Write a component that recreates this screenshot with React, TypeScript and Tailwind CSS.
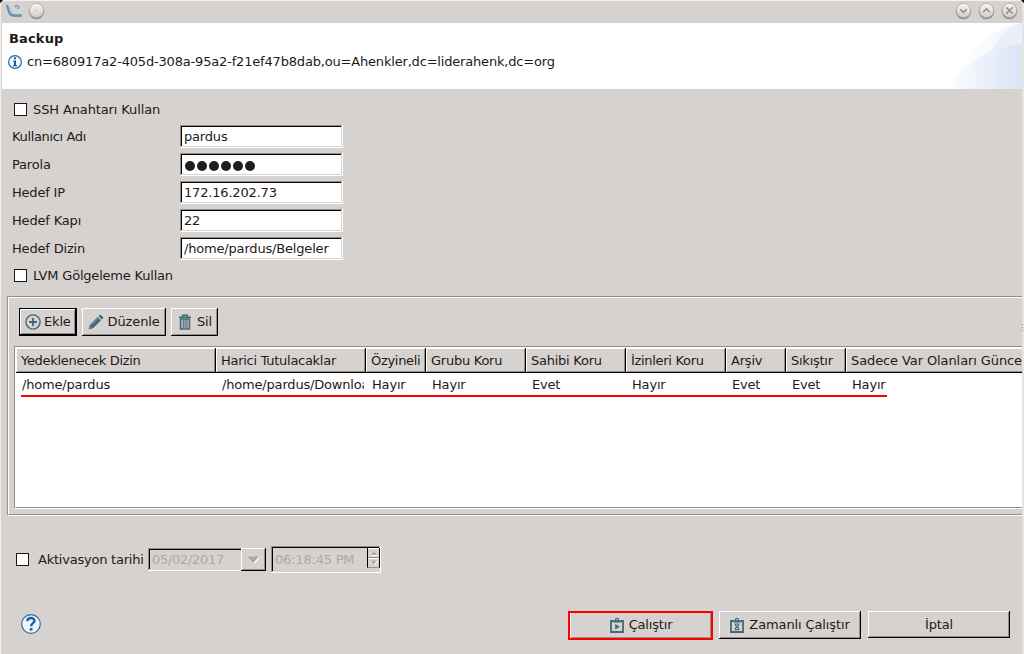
import React from "react";

const RAISED =
  "shadow-[inset_-1px_-1px_0_#000,inset_1px_1px_0_#fff,inset_-2px_-2px_0_#968e8b]";
const SUNKEN =
  "shadow-[inset_-1px_-1px_0_#fff,inset_1px_1px_0_#968e8b,inset_-2px_-2px_0_#d6d2cf,inset_2px_2px_0_#000]";

function TitleButton({ children }: { children: React.ReactNode }) {
  return (
    <svg width="17" height="18" viewBox="0 0 17 18" fill="none">
      <circle cx="8.5" cy="9.6" r="7.7" fill="#858280" opacity=".85" />
      <circle cx="8.5" cy="8.5" r="7.2" fill="url(#knob)" stroke="#a5a19f" strokeWidth=".8" />
      {children}
    </svg>
  );
}

function Check({ label, gap }: { label: string; gap: string }) {
  return (
    <label className={`flex items-center ${gap}`}>
      <span className="h-[13px] w-[13px] shrink-0 border border-[#1a1615] bg-white" />
      <span>{label}</span>
    </label>
  );
}

function Field({ label, value, labelTracking = "" }: { label: string; value: string; labelTracking?: string }) {
  return (
    <div className="flex h-7 items-center pl-[10px]">
      <span className={`w-[168px] pt-[2px] ${labelTracking}`}>{label}</span>
      <span className={`flex h-[23px] w-[163px] items-center bg-white pt-px pl-1 ${SUNKEN}`}>{value}</span>
    </div>
  );
}

function Password() {
  return (
    <div className="flex h-7 items-center pl-[10px]">
      <span className="w-[168px] pt-[2px]">Parola</span>
      <span className={`flex h-[23px] w-[163px] items-center gap-[2px] bg-white pt-[3px] pl-[5px] ${SUNKEN}`}>
        {[0, 1, 2, 3, 4, 5].map((i) => (
          <span key={i} className="h-[10px] w-[10px] rounded-full bg-[#211d1c]" />
        ))}
      </span>
    </div>
  );
}

function ClipIcon({ kind }: { kind: "play" | "wait" }) {
  return (
    <svg width="14" height="16" viewBox="0 0 14 16" fill="none" className="-mt-px">
      <path d="M3.5 4H1V15H13V4H10.5" stroke="#43687a" strokeWidth="1.8" />
      <path d="M3.2 5.6V3.2H4.8A2.2 2.4 0 0 1 9.2 3.2H10.8V5.6Z" fill="#43687a" />
      <circle cx="7" cy="2.6" r=".8" fill="#d6d2cf" />
      {kind === "play" ? (
        <path d="M5.2 6.9L10 9.7L5.2 12.5Z" fill="#43687a" />
      ) : (
        <path d="M4.7 7H9.3M4.7 12.6H9.3M5.4 7V8.2L8.6 11.2V12.6M8.6 7V8.2L5.4 11.2V12.6" stroke="#43687a" strokeWidth="1.1" />
      )}
    </svg>
  );
}

const columns = [
  { title: "Yedeklenecek Dizin", value: "/home/pardus", width: "w-[200px]", tracking: "tracking-[-0.3px]" },
  { title: "Harici Tutulacaklar", value: "/home/pardus/Downloa", width: "w-[150px]", tracking: "tracking-[-0.28px]" },
  { title: "Özyineli", value: "Hayır", width: "w-[60px]", tracking: "tracking-[-0.3px]" },
  { title: "Grubu Koru", value: "Hayır", width: "w-[100px]", tracking: "tracking-[-0.25px]" },
  { title: "Sahibi Koru", value: "Evet", width: "w-[100px]", tracking: "tracking-[-0.25px]" },
  { title: "İzinleri Koru", value: "Hayır", width: "w-[100px]", tracking: "tracking-[-0.3px]" },
  { title: "Arşiv", value: "Evet", width: "w-[60px]", tracking: "tracking-[-0.2px]" },
  { title: "Sıkıştır", value: "Evet", width: "w-[60px]", tracking: "tracking-[-0.25px]" },
  { title: "Sadece Var Olanları Günce", value: "Hayır", width: "w-[240px]", tracking: "tracking-[-0.1px]" },
];

export default function App() {
  return (
    <div className="relative h-[654px] w-[1024px] overflow-hidden">
      <div className="flex h-[654px] w-[1024px] flex-col overflow-hidden border-t border-r-2 border-l border-t-[#f2f1f0] border-r-[#e6e4e2] border-l-[#efedec] bg-[#d6d2cf] pl-px font-['DejaVu_Sans',sans-serif] text-[13px] leading-4 tracking-[-0.18px] whitespace-nowrap text-[#1e1a19]">
        <header className="flex h-[22px] shrink-0 items-start pt-px pr-[4px] pl-1">
          <svg width="17" height="17" viewBox="0 0 17 17" fill="none">
            <path d="M1 4C2.2 5 2.2 8.4 3.6 10.8C4.8 13 6 13.6 8.5 13.6H14.8" stroke="#6299b2" strokeWidth="2.6" strokeLinecap="round" />
            <path d="M8.5 4.8C10.5 3.4 13 3.7 12.7 5.8L11.6 7" stroke="#84a5b3" strokeWidth="1.8" />
          </svg>
          <span className="ml-[5px]">
            <svg width="17" height="18" viewBox="0 0 17 18">
              <defs>
                <linearGradient id="knob" x1="0" y1="0" x2="0" y2="1">
                  <stop offset="0" stopColor="#f8f7f6" />
                  <stop offset="1" stopColor="#cfccc9" />
                </linearGradient>
              </defs>
              <circle cx="8.5" cy="9.6" r="7.7" fill="#858280" opacity=".85" />
              <circle cx="8.5" cy="8.5" r="7.2" fill="url(#knob)" stroke="#a5a19f" strokeWidth=".8" />
              <circle cx="8.5" cy="8.5" r=".6" fill="#888" />
            </svg>
          </span>
          <div className="ml-auto flex gap-[6px]">
            <TitleButton>
              <path d="M5.3 7.3L8.5 10.5L11.7 7.3" stroke="#8b8886" strokeWidth="1.4" />
            </TitleButton>
            <TitleButton>
              <path d="M5.3 10L8.5 6.8L11.7 10" stroke="#8b8886" strokeWidth="1.4" />
            </TitleButton>
            <TitleButton>
              <path d="M5.2 5.2L11.8 11.8M11.8 5.2L5.2 11.8" stroke="#8b8886" strokeWidth="1.4" />
            </TitleButton>
          </div>
        </header>

        <section className="flex h-[66px] shrink-0 justify-between bg-white">
          <div className="pt-2 pl-[7px]">
            <h1 className="text-[13px] leading-4 font-bold tracking-[0.15px]">Backup</h1>
            <div className="mt-[7px] flex items-center">
              <svg width="14" height="14" viewBox="0 0 14 14" className="-ml-px">
                <circle cx="7" cy="7" r="6.4" fill="#f3f8fc" stroke="#2a67a8" strokeWidth="1.2" />
                <path d="M6 2.3H8V4.2H6ZM5 5.4H8V10H9V11.2H5V10H6V6.5H5Z" fill="#195aa5" />
              </svg>
              <span className="ml-[5px]">cn=680917a2-405d-308a-95a2-f21ef47b8dab,ou=Ahenkler,dc=liderahenk,dc=org</span>
            </div>
          </div>
          <svg width="74" height="66" viewBox="0 0 74 66">
            <defs>
              <linearGradient id="swoosh" x1="0" y1="0" x2="1" y2="0">
                <stop offset="0" stopColor="#fbfcff" />
                <stop offset="1" stopColor="#dbe4f6" />
              </linearGradient>
              <linearGradient id="haze" x1="0" y1="0" x2="1" y2="0">
                <stop offset="0" stopColor="#fff" />
                <stop offset="1" stopColor="#f1f5fd" />
              </linearGradient>
            </defs>
            <path d="M5 66C15 28 45 3 74 0V66Z" fill="url(#haze)" />
            <path d="M40 34C48 16 60 4 74 0V34Z" fill="#e9f0fb" />
            <path d="M0 66C18 37 43 25 74 21V66Z" fill="url(#swoosh)" />
          </svg>
        </section>

        <section className="flex shrink-0 flex-col pt-[7px]">
          <div className="flex h-[26px] items-center pt-px pl-3 tracking-[-0.12px]">
            <Check label="SSH Anahtarı Kullan" gap="gap-[6px]" />
          </div>
          <Field label="Kullanıcı Adı" value="pardus" labelTracking="tracking-[-0.36px]" />
          <Password />
          <Field label="Hedef IP" value="172.16.202.73" labelTracking="tracking-[-0.2px]" />
          <Field label="Hedef Kapı" value="22" />
          <Field label="Hedef Dizin" value="/home/pardus/Belgeler" />
          <div className="flex h-[26px] items-center pt-px pl-3 tracking-[-0.2px]">
            <Check label="LVM Gölgeleme Kullan" gap="gap-[6px]" />
          </div>
        </section>

        <section className="mt-2 ml-[5px] flex h-[220px] shrink-0 flex-col border-y border-l border-t-[#968e8b] border-b-white border-l-[#968e8b]">
          <div className="flex flex-1 flex-col border-y border-l border-t-white border-b-[#968e8b] border-l-white pt-[10px] pl-[10px]">
            <div className="flex h-7 items-stretch">
              <button className={`flex w-[58px] items-center border border-black pl-[5px] ${RAISED}`}>
                <svg width="16" height="16" viewBox="0 0 16 16" fill="none" stroke="#43687a">
                  <circle cx="8" cy="8" r="7.1" strokeWidth="1.4" />
                  <path d="M8 4V12M4 8H12" strokeWidth="1.9" />
                </svg>
                <span className="ml-[3px]">Ekle</span>
              </button>
              <button className={`ml-[5px] flex w-[84px] items-center pl-[6px] ${RAISED}`}>
                <svg width="16" height="16" viewBox="0 0 16 16" fill="#43687a">
                  <path d="M.5 15.5L2 10.7L9.7 3L13 6.3L5.3 14ZM10.5 2.2L12.3.5L15.5 3.7L13.8 5.5Z" />
                  <path d="M3.2 11.2L10.5 4M2 14.2L3.1 12.9" stroke="#c4d1d7" strokeWidth=".6" />
                </svg>
                <span className="ml-[3.5px] tracking-[-0.1px]">Düzenle</span>
              </button>
              <button className={`ml-[5px] flex w-[47px] items-center pl-[6px] ${RAISED}`}>
                <svg width="16" height="16" viewBox="0 0 16 16" fill="none" stroke="#43687a">
                  <path d="M2 3.2H14M5.5 3V1.2H10.5V3M3.6 5V15H12.4V5Z" strokeWidth="1.6" />
                  <path d="M6.2 5.5V14M8.1 5.5V14M10 5.5V14" strokeWidth="1.1" />
                </svg>
                <span className="ml-1">Sil</span>
              </button>
            </div>
            <div className="mt-[10px] -ml-[5px] flex h-[163px] flex-col border-y border-l border-t-[#968e8b] border-b-white border-l-[#968e8b]">
              <div className="flex flex-1 flex-col overflow-hidden border-y border-l border-t-white border-b-[#968e8b] border-l-white bg-white">
                <div className="flex h-[25px] shrink-0">
                  {columns.map((c) => (
                    <div key={c.title} className={`flex shrink-0 items-center bg-[#d6d2cf] pl-[5px] ${RAISED} ${c.width} ${c.tracking}`}>
                      {c.title}
                    </div>
                  ))}
                </div>
                <div className="flex h-6 shrink-0 items-center">
                  {columns.map((c) => (
                    <div key={c.title} className={`shrink-0 pr-[2px] pl-[6px] ${c.width}`}>
                      <div className="overflow-hidden">{c.value}</div>
                    </div>
                  ))}
                </div>
                <div className="-mt-[2px] ml-[5px] h-[2px] w-[866px] shrink-0 bg-[#f00]" />
              </div>
            </div>
          </div>
        </section>

        <section className="mt-[30px] flex h-[27px] shrink-0 items-center pl-[14px]">
          <div className="w-[127px] tracking-[-0.23px]">
            <Check label="Aktivasyon tarihi" gap="gap-[9px]" />
          </div>
          <div className={`ml-[5px] flex h-[23px] w-[118px] justify-between text-[#aea8a5] ${SUNKEN}`}>
            <span className="self-center pl-1 tracking-[-0.3px]">05/02/2017</span>
            <span className={`flex w-[25px] items-center justify-center bg-[#d6d2cf] ${RAISED}`}>
              <svg width="13" height="8" viewBox="0 0 13 8">
                <path d="M2 1.5H13L7.5 8Z" fill="#fff" />
                <path d="M.5 .5H12L6.3 7Z" fill="#aea8a5" />
              </svg>
            </span>
          </div>
          <div className={`ml-[5px] flex h-[27px] w-[110px] justify-between text-[#aea8a5] ${SUNKEN}`}>
            <span className="self-center pl-1 tracking-[-0.2px]">06:18:45 PM</span>
            <span className="mt-[2px] mr-px flex h-[20px] w-[13px] flex-col border-x border-b border-x-black border-b-[#968e8b]">
              <svg width="11" height="19" viewBox="0 0 11 19">
                <path d="M0 .5H11M0 10.5H11" stroke="#fff" />
                <path d="M0 9.5H11" stroke="#968e8b" />
                <path d="M3 7L6 3L9 7Z" fill="#aea8a5" />
                <path d="M3 7.5H9" stroke="#fff" />
                <path d="M4 13L7 17L10 13Z" fill="#fff" />
                <path d="M3 12.5H9L6 16.5Z" fill="#aea8a5" />
              </svg>
            </span>
          </div>
        </section>

        <footer className="mt-[38px] flex h-[29px] shrink-0 items-start pr-3 pl-[19px]">
          <svg className="mt-[3px]" width="20" height="20" viewBox="0 0 20 20" fill="none">
            <circle cx="10" cy="10" r="9.3" fill="#edf4fa" stroke="#2f6b9f" strokeWidth="1.2" />
            <path d="M6.4 7.1C6.3 3.1 13.7 2.8 13.5 6.9C13.4 9.2 10.1 9.2 10.1 12.2" stroke="#23629c" strokeWidth="2.5" />
            <circle cx="10.1" cy="15.2" r="1.5" fill="#23629c" />
          </svg>
          <button className="ml-auto flex h-[29px] w-[145px] items-center justify-center border-2 border-[#f00] pb-px pl-px shadow-[inset_1px_0_0_#fff,inset_-1px_-1px_0_#968e8b]">
            <ClipIcon kind="play" />
            <span className="ml-[5px]">Çalıştır</span>
          </button>
          <button className={`ml-[6px] flex h-7 w-[142px] items-center justify-center ${RAISED}`}>
            <ClipIcon kind="wait" />
            <span className="ml-[5px] tracking-[-0.12px]">Zamanlı Çalıştır</span>
          </button>
          <button className={`ml-[7px] flex h-[27px] w-[142px] items-center justify-center ${RAISED}`}>İptal</button>
        </footer>
      </div>

      <svg className="absolute top-0 left-0" width="1024" height="3">
        <path d="M0 0H3L0 3ZM1024 0H1021L1024 3Z" fill="#000" />
      </svg>
      <svg className="absolute top-[323px] right-0" width="3" height="9">
        <path d="M1 1H2V2H1ZM1 4H2V5H1ZM1 7H2V8H1Z" fill="#968e8b" />
      </svg>
    </div>
  );
}
